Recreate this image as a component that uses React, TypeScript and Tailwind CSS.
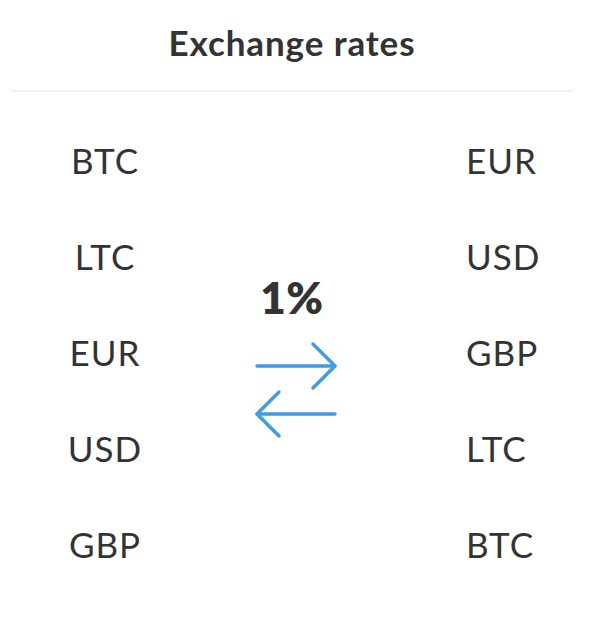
const left = ["BTC", "LTC", "EUR", "USD", "GBP"];
const right = ["EUR", "USD", "GBP", "LTC", "BTC"];

function SwapArrows() {
  return (
    <svg width="84" height="98" viewBox="0 0 84 98" fill="none" stroke="#3f9de0" strokeWidth="3.5" strokeLinecap="round" strokeLinejoin="round">
      <path d="M3 25H81" />
      <path d="M59 3L81 25L59 47" />
      <path d="M81 73H3" />
      <path d="M25 51L3 73L25 95" />
    </svg>
  );
}

export default function App() {
  return (
    <div className="min-h-screen w-full bg-white text-[#333] font-['Lato','Noto_Sans',sans-serif]">
      <div className="w-[584px] px-[11px]">
        <header className="h-[90px] flex items-center justify-center pb-[6px]">
          <h1 className="text-[35px] font-bold leading-none tracking-[0.9px]">Exchange rates</h1>
        </header>
        <div className="h-[2px] bg-[#f2f2f2]" />

        <div className="grid grid-cols-[188px_186px_1fr] pt-[20px]">
          <ul className="flex flex-col">
            {left.map((c) => (
              <li key={c} className="h-[96px] flex items-center justify-center text-[35px] leading-none tracking-[1px]">
                {c}
              </li>
            ))}
          </ul>

          <div className="flex flex-col items-center pt-[163px]">
            <span className="text-[44px] font-extrabold leading-none tracking-[0.5px]">1%</span>
            <div className="mt-[22px] ml-[8px]">
              <SwapArrows />
            </div>
          </div>

          <ul className="flex flex-col pl-[81px]">
            {right.map((c) => (
              <li key={c} className="h-[96px] flex items-center text-[35px] leading-none tracking-[1px]">
                {c}
              </li>
            ))}
          </ul>
        </div>
      </div>
    </div>
  );
}
